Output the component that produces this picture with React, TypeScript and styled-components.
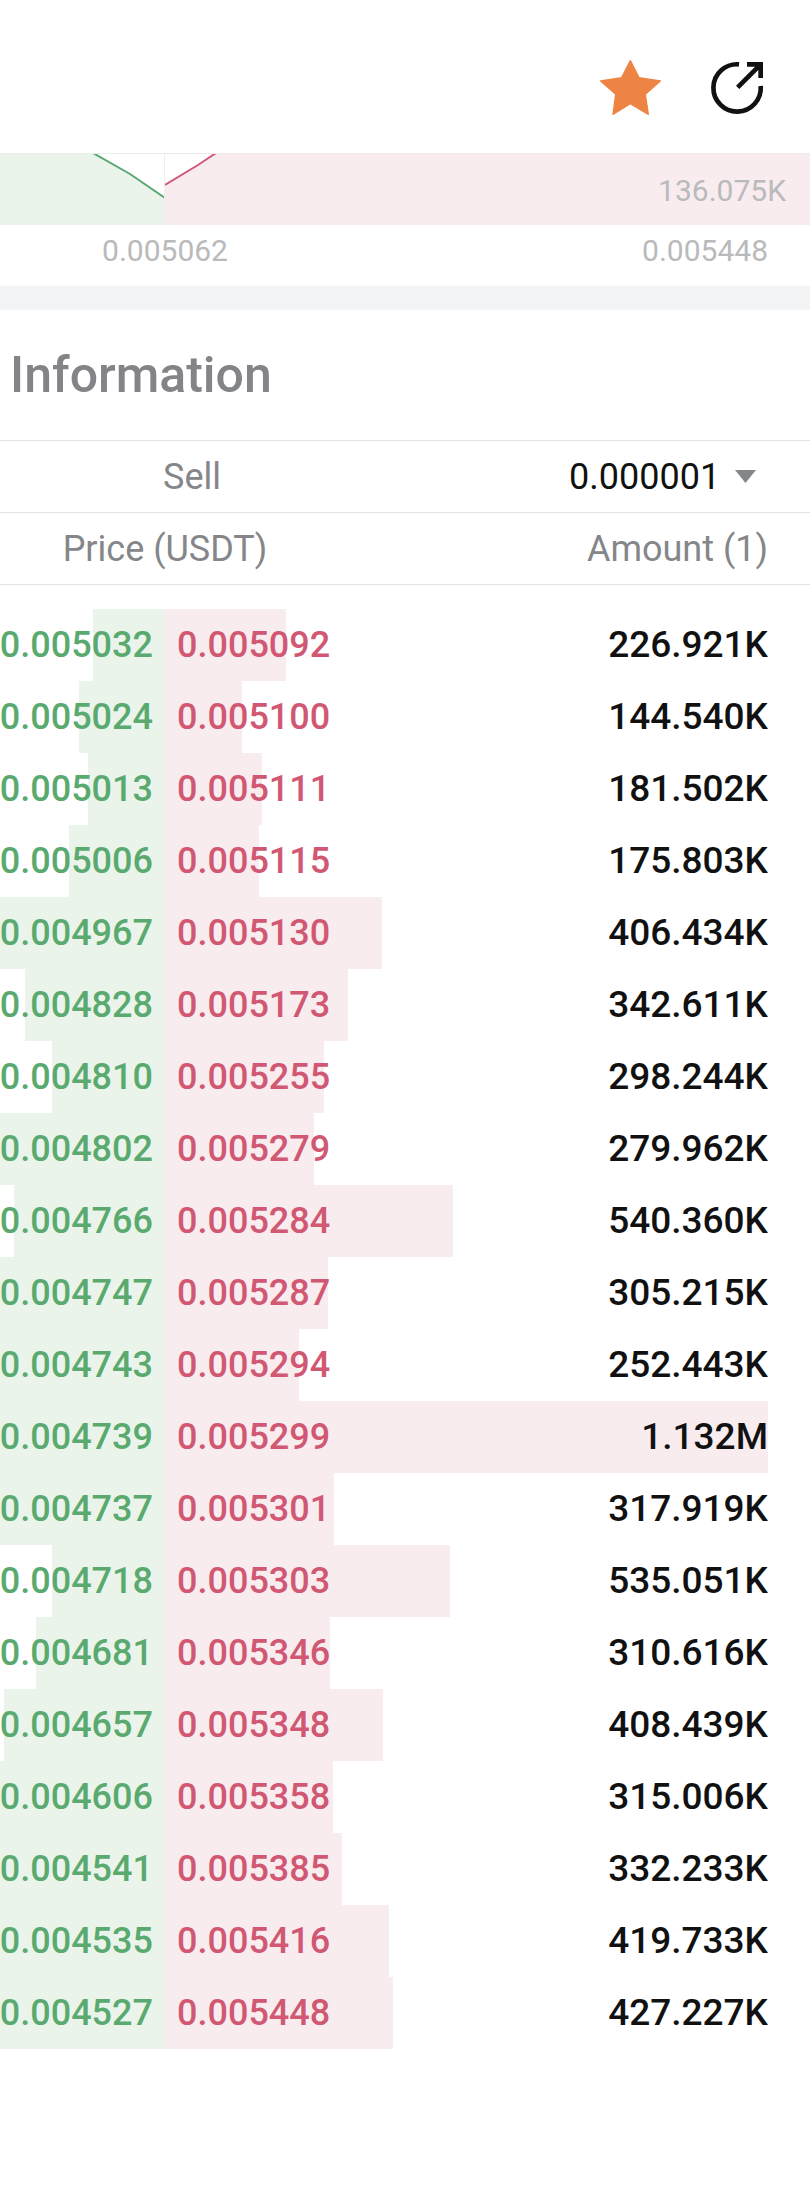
import React from "react";
import styled, { createGlobalStyle } from "styled-components";

const BUY_WIDTH = 165;
const GUTTER = 42;
const MAX_AMOUNT = 1132;

const GlobalStyle = createGlobalStyle`
  *, *::before, *::after { box-sizing: border-box; }
  body {
    margin: 0;
    background: #fff;
    color: #111;
    font-family: Roboto, "Noto Sans", sans-serif;
    font-size: 36px;
    line-height: 44px;
  }
`;

const Page = styled.main`
  overflow: hidden;
  padding-bottom: 138px;
`;

const TopBar = styled.header`
  display: flex;
  justify-content: flex-end;
  align-items: center;
  gap: 40px;
  height: 153px;
  padding: 22px 46px 0 0;
`;

const IconButton = styled.button`
  display: flex;
  padding: 0;
  border: 0;
  background: none;
  cursor: pointer;
`;

const Chart = styled.section`
  display: flex;
  height: 72px;
`;

const BuyArea = styled.div`
  flex: 0 0 ${BUY_WIDTH}px;
  background: #eaf4eb;
  border-top: 1px solid #e9efea;
  svg { display: block; }
`;

const SellArea = styled.div`
  display: flex;
  flex: 1;
  justify-content: space-between;
  padding-right: 24px;
  background: #f9ecef;
  border-top: 1px solid #f0e9eb;
  svg { display: block; }
`;

const ChartLabel = styled.span<{ $pad?: number }>`
  color: #b9babc;
  font-size: 30px;
  line-height: 36px;
  padding-top: ${(p) => p.$pad || 0}px;
`;

const Axis = styled.div`
  display: flex;
  justify-content: space-between;
  height: 61px;
  padding: 8px ${GUTTER}px 0 0;
`;

const AxisStart = styled.div`
  display: flex;
  justify-content: center;
  width: ${BUY_WIDTH * 2}px;
`;

const Divider = styled.div`
  height: 24px;
  background: #f2f4f6;
`;

const Title = styled.h1`
  margin: 0;
  padding: 37px 10px 37px;
  color: #828487;
  font-size: 50px;
  line-height: 56px;
  font-weight: 500;
`;

const ControlRow = styled.div`
  display: flex;
  justify-content: space-between;
  align-items: center;
  height: 72px;
  padding: 0 54px 0 ${BUY_WIDTH - 2}px;
  border-top: 1px solid #e2e2e3;
  color: #858689;
`;

const Precision = styled.label`
  display: flex;
  align-items: center;
  gap: 14px;
`;

const PrecisionSelect = styled.select`
  appearance: none;
  margin: 0;
  padding: 0;
  border: 0;
  background: none;
  color: #111;
  font: inherit;
`;

const Table = styled.table`
  display: block;
  border-collapse: collapse;
  thead, tbody { display: block; }
`;

const HeadRow = styled.tr`
  display: flex;
  justify-content: space-between;
  align-items: center;
  height: 73px;
  margin-bottom: 24px;
  padding-right: ${GUTTER}px;
  border-top: 1px solid #e2e2e3;
  border-bottom: 1px solid #e2e2e3;
  color: #858689;
`;

const HeadCell = styled.th<{ $centered?: boolean }>`
  width: ${(p) => (p.$centered ? `${BUY_WIDTH * 2}px` : "auto")};
  padding: 0;
  font-weight: 400;
  text-align: center;
`;

const Row = styled.tr`
  position: relative;
  display: grid;
  grid-template-columns: ${BUY_WIDTH}px 1fr auto;
  align-items: center;
  height: 72px;
  padding-right: ${GUTTER}px;
  font-weight: 500;
`;

const Bar = styled.span<{ $side: "buy" | "sell" }>`
  position: absolute;
  z-index: -1;
  top: 0;
  bottom: 0;
  ${(p) =>
    p.$side === "buy"
      ? `right: calc(100% - ${BUY_WIDTH}px); background: #eaf4eb;`
      : `left: ${BUY_WIDTH}px; background: #f9ecef;`}
`;

const BuyPrice = styled.td`
  display: flex;
  justify-content: flex-end;
  padding: 0 12px 0 0;
  color: #5aaa70;
`;

const SellPrice = styled.td`
  padding: 0 0 0 12px;
  color: #d05873;
`;

const Amount = styled.td`
  padding: 0;
  font-size: 37px;
`;

type Level = {
  bid: string;
  bidDepth: number;
  ask: string;
  amount: string;
};

const level = (bid: string, bidDepth: number, ask: string, amount: string): Level => ({
  bid,
  bidDepth,
  ask,
  amount,
});

const levels: Level[] = [
  level("0.005032", 135, "0.005092", "226.921K"),
  level("0.005024", 162, "0.005100", "144.540K"),
  level("0.005013", 145, "0.005111", "181.502K"),
  level("0.005006", 180, "0.005115", "175.803K"),
  level("0.004967", 320, "0.005130", "406.434K"),
  level("0.004828", 263, "0.005173", "342.611K"),
  level("0.004810", 212, "0.005255", "298.244K"),
  level("0.004802", 320, "0.005279", "279.962K"),
  level("0.004766", 284, "0.005284", "540.360K"),
  level("0.004747", 320, "0.005287", "305.215K"),
  level("0.004743", 320, "0.005294", "252.443K"),
  level("0.004739", 320, "0.005299", "1.132M"),
  level("0.004737", 320, "0.005301", "317.919K"),
  level("0.004718", 212, "0.005303", "535.051K"),
  level("0.004681", 242, "0.005346", "310.616K"),
  level("0.004657", 302, "0.005348", "408.439K"),
  level("0.004606", 320, "0.005358", "315.006K"),
  level("0.004541", 320, "0.005385", "332.233K"),
  level("0.004535", 320, "0.005416", "419.733K"),
  level("0.004527", 320, "0.005448", "427.227K"),
];

const toThousands = (amount: string) =>
  parseFloat(amount) * (amount.endsWith("M") ? 1000 : 1);

const barWidth = (thousands: number) =>
  `calc((100% - ${BUY_WIDTH + GUTTER}px) * ${thousands / MAX_AMOUNT})`;

export default function App() {
  return (
    <>
      <GlobalStyle />
      <Page>
        <TopBar>
          <IconButton aria-label="Favourite">
            <svg width="72" height="60" viewBox="114 84 216 180" fill="#ee8444" stroke="#ee8444" strokeWidth="4" strokeLinejoin="round">
              <path d="M211 92 237 143 301 153 256 193 265 253 211 221 159 253 167 193 122 153 185 143Z" />
            </svg>
          </IconButton>
          <IconButton aria-label="Share">
            <svg width="54" height="54" viewBox="450 93 162 162" fill="none" stroke="#111" strokeWidth="14">
              <path d="M537 103A71 71 0 1 0 602 168M561 103H602V144M533 172 602 103" />
            </svg>
          </IconButton>
        </TopBar>

        <Chart aria-label="Depth chart">
          <BuyArea>
            <svg width="165" height="71" fill="none">
              <path d="M93 0 130 21 165 45V0Z" fill="#fff" />
              <path d="M93 -1 130 20 165 44" stroke="#58a873" strokeWidth="2" />
              <path d="M164.500 0V71" stroke="#edf1ee" />
            </svg>
          </BuyArea>
          <SellArea>
            <svg width="60" height="71" fill="none">
              <path d="M0 31 33 11 51 -1H0Z" fill="#fff" />
              <path d="M0 31 33 11 51 -1" stroke="#cf5a7a" strokeWidth="2" />
            </svg>
            <ChartLabel $pad={19}>136.075K</ChartLabel>
          </SellArea>
        </Chart>
        <Axis>
          <AxisStart>
            <ChartLabel>0.005062</ChartLabel>
          </AxisStart>
          <ChartLabel>0.005448</ChartLabel>
        </Axis>
        <Divider />

        <Title>Information</Title>
        <ControlRow>
          <span>Sell</span>
          <Precision>
            <PrecisionSelect aria-label="Price precision">
              <option>0.000001</option>
            </PrecisionSelect>
            <svg width="21" height="13" fill="#858689">
              <path d="M0 0H21L10.500 13Z" />
            </svg>
          </Precision>
        </ControlRow>

        <Table>
          <thead>
            <HeadRow>
              <HeadCell $centered>Price (USDT)</HeadCell>
              <HeadCell>Amount (1)</HeadCell>
            </HeadRow>
          </thead>
          <tbody>
            {levels.map(({ bid, bidDepth, ask, amount }) => (
              <Row key={ask}>
                <BuyPrice>
                  <Bar $side="buy" style={{ width: barWidth(bidDepth) }} />
                  {bid}
                </BuyPrice>
                <SellPrice>
                  <Bar $side="sell" style={{ width: barWidth(toThousands(amount)) }} />
                  {ask}
                </SellPrice>
                <Amount>{amount}</Amount>
              </Row>
            ))}
          </tbody>
        </Table>
      </Page>
    </>
  );
}
